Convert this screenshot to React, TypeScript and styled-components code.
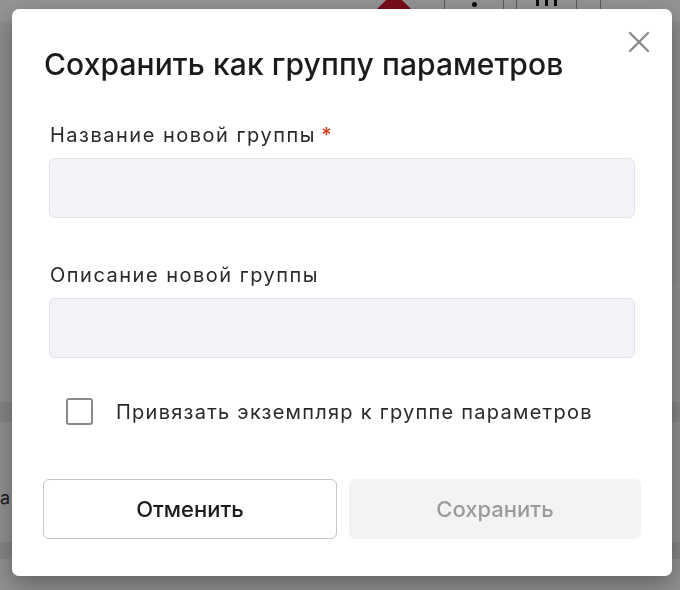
import { useState } from 'react';
import styled, { createGlobalStyle } from 'styled-components';

const GlobalStyle = createGlobalStyle`
	html, body {
		margin: 0;
		padding: 0;
		width: 680px;
		height: 590px;
		overflow: hidden;
		font-family: 'Inter', 'Noto Sans', sans-serif;
	}
	* {
		box-sizing: border-box;
	}
`;

function App() {
	const [name, setName] = useState('');
	const [desc, setDesc] = useState('');
	const [bind, setBind] = useState(false);

	return (
		<>
			<GlobalStyle />
			<Page>
				<TopBar>
					<Spacer />
					<Warn />
					<ToolCell $w={59}>
						<Dot />
					</ToolCell>
					<ToolCell $w={13} />
					<ToolCell $w={60}>
						<Bars>
							<i />
							<i />
							<i />
						</Bars>
					</ToolCell>
					<ToolCell $w={24} />
					<ToolCell $w={80} />
				</TopBar>
				<PageRow $h={260} $tone="#f4f5f8" />
				<PageRow $h={120} $tone="#fafafa" />
				<PageRow $h={20} $tone="#e6e7ea" />
				<PageRow $h={120} $tone="#fafafa">
					<RowText>а</RowText>
				</PageRow>
				<PageRow $h={17} $tone="#e6e7ea" />
				<PageRow $h={40} $tone="#fafafa" />
			</Page>
			<Overlay>
				<Modal>
					<CloseBtn aria-label="Закрыть">
						<svg width="22" height="22" viewBox="0 0 22 22">
							<path d="M2 2L20 20M20 2L2 20" stroke="#8c8c8c" strokeWidth="2.4" strokeLinecap="round" />
						</svg>
					</CloseBtn>
					<Title>Сохранить как группу параметров</Title>
					<Field>
						<Label>
							Название новой группы<Req>*</Req>
						</Label>
						<Input value={name} onChange={(e) => setName(e.target.value)} />
					</Field>
					<Field>
						<Label>Описание новой группы</Label>
						<Input value={desc} onChange={(e) => setDesc(e.target.value)} />
					</Field>
					<CheckRow onClick={() => setBind(!bind)}>
						<Box $checked={bind} />
						<CheckText>Привязать экземпляр к группе параметров</CheckText>
					</CheckRow>
					<Actions>
						<CancelBtn>Отменить</CancelBtn>
						<SaveBtn disabled={!name}>Сохранить</SaveBtn>
					</Actions>
				</Modal>
			</Overlay>
		</>
	);
}

const Page = styled.div`
	width: 680px;
	height: 590px;
	display: flex;
	flex-flow: column nowrap;
	background: #f4f5f8;
`;
const TopBar = styled.div`
	flex: 0 0 auto;
	height: 22px;
	display: flex;
	flex-flow: row nowrap;
	align-items: stretch;
	background: #ffffff;
`;
const Spacer = styled.div`
	width: 377px;
`;
const Warn = styled.div`
	width: 34px;
	margin-right: 33px;
	align-self: flex-start;
	margin-top: -8px;
	border-left: 17px solid transparent;
	border-right: 17px solid transparent;
	border-bottom: 17px solid #d2142f;
`;
const ToolCell = styled.div<{ $w: number }>`
	width: ${(p) => p.$w}px;
	border-left: 1px solid #9a9a9a;
	display: flex;
	justify-content: center;
	align-items: flex-start;
`;
const Dot = styled.span`
	width: 5px;
	height: 5px;
	margin-top: 2px;
	border-radius: 50%;
	background: #111;
`;
const Bars = styled.span`
	display: flex;
	gap: 6px;
	i {
		width: 3px;
		height: 6px;
		background: #111;
	}
`;
const PageRow = styled.div<{ $h: number; $tone: string }>`
	flex: 0 0 auto;
	height: ${(p) => p.$h}px;
	background: ${(p) => p.$tone};
	display: flex;
	align-items: center;
`;
const RowText = styled.span`
	font-size: 18px;
	color: #333;
	margin: 30px 0 0 0;
`;
const Overlay = styled.div`
	position: fixed;
	inset: 0;
	background: rgba(0, 0, 0, 0.42);
	display: flex;
	align-items: flex-start;
	justify-content: flex-start;
	padding: 9px 0 0 12px;
`;
const Modal = styled.div`
	position: relative;
	width: 660px;
	height: 567px;
	background: #ffffff;
	border-radius: 7px;
	box-shadow: 0 8px 24px rgba(0, 0, 0, 0.35);
	padding: 35px 31px 0 31px;
	display: flex;
	flex-flow: column nowrap;
`;
const CloseBtn = styled.button`
	position: absolute;
	top: 18px;
	right: 18px;
	width: 30px;
	height: 30px;
	padding: 0;
	border: none;
	background: none;
	display: flex;
	align-items: center;
	justify-content: center;
	cursor: pointer;
`;
const Title = styled.h2`
	margin: 0 0 0 1px;
	font-size: 30px;
	line-height: 40px;
	font-weight: 500;
	color: #1b1b1b;
	letter-spacing: 0.1px;
`;
const Field = styled.div`
	display: flex;
	flex-flow: column nowrap;
	padding: 0 6px;
	margin-top: 39px;
	& + & {
		margin-top: 45px;
	}
`;
const Label = styled.label`
	font-size: 20px;
	line-height: 24px;
	color: #2a2a2a;
	letter-spacing: 1.5px;
	margin-bottom: 11px;
	margin-left: 1px;
`;
const Req = styled.span`
	color: #d4441f;
	margin-left: 5px;
	font-weight: 600;
`;
const Input = styled.input`
	height: 60px;
	border: 1.5px solid #e2e4ea;
	border-radius: 6px;
	background: #f2f4f9;
	padding: 0 14px;
	font-family: inherit;
	font-size: 18px;
	&:focus {
		outline: none;
		border-color: #b8c0d0;
	}
`;
const CheckRow = styled.div`
	display: flex;
	align-items: center;
	gap: 23px;
	margin: 40px 0 0 23px;
	cursor: pointer;
`;
const Box = styled.span<{ $checked: boolean }>`
	width: 27px;
	height: 27px;
	border: 2px solid #8a8a8a;
	border-radius: 3px;
	background: ${(p) => (p.$checked ? '#8a8a8a' : '#fff')};
`;
const CheckText = styled.span`
	font-size: 20px;
	line-height: 24px;
	color: #2a2a2a;
	letter-spacing: 1.25px;
`;
const Actions = styled.div`
	display: grid;
	grid-template-columns: 294px 292px;
	gap: 12px;
	margin-top: 54px;
`;
const CancelBtn = styled.button`
	height: 60px;
	border: 1px solid #c6c6c9;
	border-radius: 6px;
	background: #fff;
	font-family: inherit;
	font-size: 22px;
	font-weight: 500;
	color: #1b1b1b;
	cursor: pointer;
`;
const SaveBtn = styled.button`
	height: 60px;
	border: none;
	border-radius: 6px;
	background: #f3f3f4;
	font-family: inherit;
	font-size: 22px;
	font-weight: 500;
	color: #9b9b9b;
	&:disabled {
		cursor: default;
	}
`;

export default App;
